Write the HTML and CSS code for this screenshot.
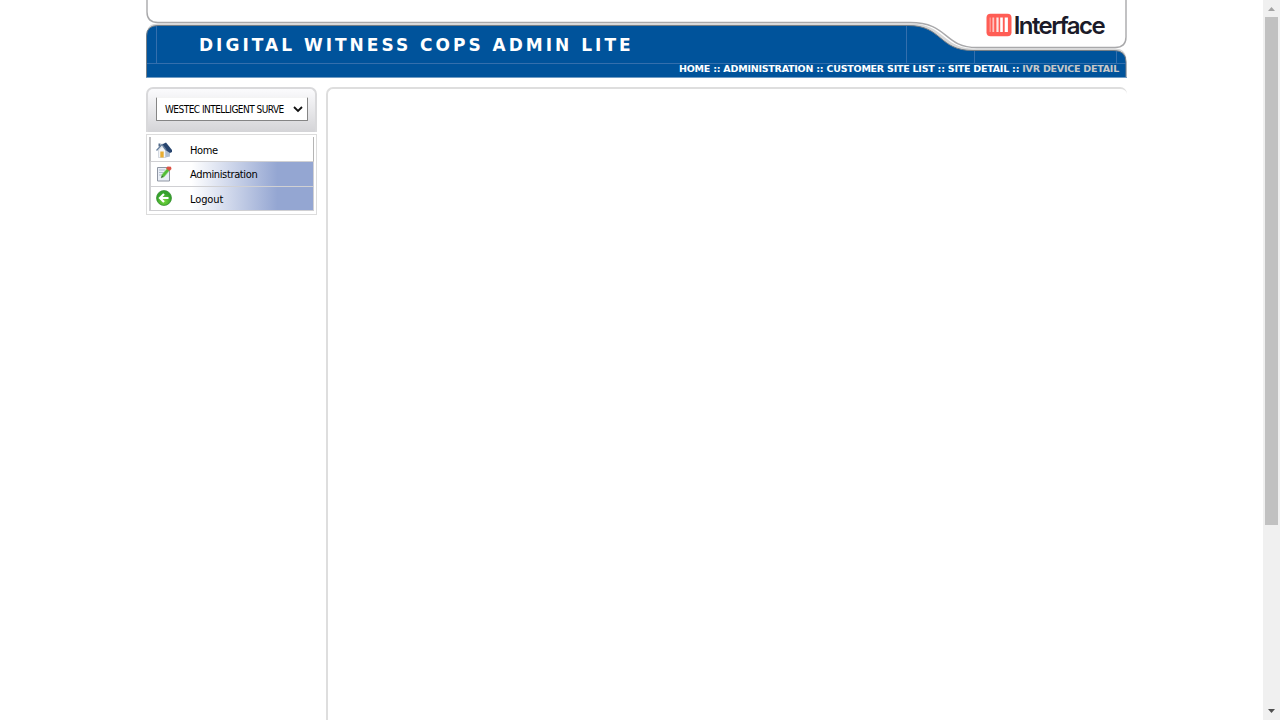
FILE: index.html
```html
<!DOCTYPE html>
<html lang="en">
<head>
<meta charset="utf-8">
<title>Digital Witness COPS Admin Lite</title>
<link rel="stylesheet" href="styles.css">
</head>
<body>
<div class="window">
  <div class="page">
    <header class="header">
      <svg class="frame" width="981" height="78" viewBox="0 0 981 78" fill="none">
        <path d="M.5 77.500V35Q.5 23.500 12 23.500H763C800 23.500 795 48.500 829 48.500H969Q980.500 48.500 980.500 61V77.500Z" fill="#d8d8d8"/>
        <path d="M.5 77.500V36Q.5 25.500 12 25.500H762C797 25.500 792 50.500 827 50.500H968Q980 50.500 980 62V77.500Z" fill="#00539b" stroke="#777f86"/>
        <path d="M1 0V12Q1 22.500 12 22.500H764C803 22.500 797 47.500 831 47.500H969Q980 47.500 980 37V0" fill="#fff"/>
        <path d="M1 0V12Q1 22.500 12 22.500H764C803 22.500 797 47.500 831 47.500H969Q980 47.500 980 37V0" stroke="#a9a9ab" stroke-width="1.400"/>
        <path d="M1 63.500H980M10.500 26V63M760.500 26V63M828.500 51V63M970.500 51V63" stroke="#346fad"/>
        <path d="M0 77.500H981" stroke="#709cc4"/>
      </svg>
      <div class="masthead">
        <h1 class="title">DIGITAL WITNESS COPS ADMIN LITE</h1>
        <div class="logo">
          <svg width="26" height="24" viewBox="0 0 26 24"><rect x=".5" y=".8" width="25" height="22.400" rx="4" fill="#ff5d55"/><path d="M4.200 4.500v14.500" stroke="#ff938d" stroke-width="1.500"/><path d="M7.300 4.500v14.500" stroke="#ffc3bf" stroke-width="1.800"/><path d="M11.500 4.500v14.500" stroke="#ffe6e4" stroke-width="2.200"/><path d="M15.500 4.500v14.500" stroke="#fff" stroke-width="2.600"/><path d="M20.300 4.500v14.500" stroke="#fff" stroke-width="3.200"/></svg>
          <span class="brand">Interface</span>
        </div>
      </div>
      <nav class="crumbs">HOME :: ADMINISTRATION :: CUSTOMER SITE LIST :: SITE DETAIL :: <span class="current">IVR DEVICE DETAIL</span></nav>
    </header>
    <div class="columns">
      <aside class="sidebar">
        <div class="picker">
          <div class="select"><span class="value">WESTEC INTELLIGENT SURVE</span><svg width="10" height="7" viewBox="0 0 10 7"><path d="M1 1l4 4 4-4" fill="none" stroke="#111" stroke-width="1.800"/></svg></div>
        </div>
        <ul class="menu">
          <li class="item plain">
            <svg class="icon" width="16" height="16" viewBox="0 0 16 16"><path d="M2.500 8L6 4.500 9.500 8v7.500h-7z" fill="#f3f5f8" stroke="#b8c1cc" stroke-width=".6"/><path d="M9.500 8l4.500 2v4.500l-4.500 1z" fill="#aebdd0"/><path d="M6 2.500L10 .5 16 8v2l-2 1-4.500-3z" fill="#28456f"/><path d="M.5 8.500L6 2.500l4 5.500" fill="none" stroke="#68819f" stroke-width="1.300"/><path d="M2.500 1.500h2v3h-2z" fill="#526b8a"/><path d="M4.300 9.500h3.400v6H4.300z" fill="#e9ae32"/></svg>
            <span class="label low">Home</span>
          </li>
          <li class="item">
            <svg class="icon" width="16" height="16" viewBox="0 0 16 16"><path d="M1.500 1.500h12v13.500h-12z" fill="#e9eef6" stroke="#8f96a3"/><path d="M3 4h6M3 6.500h5M3 9h3" stroke="#b2bdce"/><path d="M5 12l1-3.500L11.500 2l2.500 2-6 7z" fill="#51bd37" stroke="#a1dc8b" stroke-width=".6"/><path d="M10 2.500L11.500.5 15 .8 15.500 3 13.500 5z" fill="#dc5144"/><path d="M5 12l1-2.500 1.300 1.200z" fill="#375344"/></svg>
            <span class="label">Administration</span>
          </li>
          <li class="item">
            <svg class="icon up" width="16" height="16" viewBox="0 0 16 16"><defs><radialGradient id="g" cx=".5" cy=".7"><stop stop-color="#78dc3c"/><stop offset="1" stop-color="#35a12c"/></radialGradient></defs><circle cx="8" cy="8" r="7.500" fill="url(#g)" stroke="#328b2d" stroke-width=".7"/><path d="M12.500 8H4.500M8 4L4 8l4 4" fill="none" stroke="#fff" stroke-width="2.200"/></svg>
            <span class="label low wide">Logout</span>
          </li>
        </ul>
      </aside>
      <main class="content"></main>
    </div>
  </div>
  <div class="scrollbar">
    <svg width="17" height="17" viewBox="0 0 17 17"><path d="M5 11l3.500-4 3.500 4z" fill="#a3a3a3"/></svg>
    <div class="thumb"></div>
    <svg class="down" width="17" height="17" viewBox="0 0 17 17"><path d="M5 6l3.500 4L12 6z" fill="#505050"/></svg>
  </div>
</div>
</body>
</html>
```
FILE: styles.css
```css
* { box-sizing: border-box; }
body { margin: 0; background: #fff; font-family: "DejaVu Sans Condensed", "DejaVu Sans", sans-serif; font-size: 11px; color: #000; }
.window { display: flex; height: 720px; overflow: hidden; }
.page { flex: 1; display: flex; flex-direction: column; padding-left: 146px; }
.header { position: relative; width: 981px; height: 78px; }
.frame { position: absolute; left: 0; top: 0; z-index: -1; }
.masthead { display: flex; justify-content: space-between; height: 62px; padding: 0 23px 0 53px; }
.title { margin: 35px 0 0; font: bold 17px/20px "DejaVu Sans", sans-serif; letter-spacing: 3px; color: #fff; white-space: nowrap; }
.logo { display: flex; gap: 2px; margin-top: 13px; height: 24px; }
.brand { font: 600 24px/25px Inter, sans-serif; letter-spacing: -1.6px; color: #1b1b29; }
.crumbs { padding-right: 8px; text-align: right; font: bold 9.5px/14px "DejaVu Sans", sans-serif; letter-spacing: -.23px; color: #fff; white-space: nowrap; }
.current { color: #c8c8c8; }
.columns { flex: 1; display: flex; gap: 9px; width: 981px; padding-top: 9px; }
.sidebar { width: 171px; }
.picker { height: 45px; padding: 8px 7px 0 8px; border: solid #d9d9db; border-width: 2px 2px 0; border-radius: 7px 7px 0 0; background: linear-gradient(#fbfbfd, #d4d4d7); }
.select { display: flex; align-items: center; justify-content: space-between; height: 24px; padding: 0 4px 0 8px; border: 1px solid #858585; border-top-color: #f4f4f4; border-radius: 1px; background: #fff; }
.value { width: 119px; white-space: nowrap; font-size: 10px; letter-spacing: -.53px; }
.menu { list-style: none; margin: 2px 0 0; padding: 2px 2px 1px; height: 81px; border: 1px solid #dcdcdc; }
.item { display: flex; align-items: center; gap: 18px; height: 24.500px; padding: 1px 0 0 5px; border: solid #d0d0d3; border-width: 0 1px 1px 2px; background: linear-gradient(90deg, #fff 25%, #94a6d2 78%); letter-spacing: -.36px; }
.plain { height: 25px; border-left-color: #c1c1c3; border-right-color: #b5b5b5; background: #fff; }
.low { padding-top: 2px; }
.wide { letter-spacing: -.1px; }
.up { margin-bottom: 1px; }
.content { flex: 1; border: solid #dedede; border-width: 2px 0 0 2px; border-radius: 7px 7px 0 0; }
.scrollbar { display: flex; flex-direction: column; width: 17px; background: #f0f0f0; }
.thumb { width: 13px; height: 508px; margin-left: 2px; background: #c1c1c1; }
.down { margin-top: auto; }
```
